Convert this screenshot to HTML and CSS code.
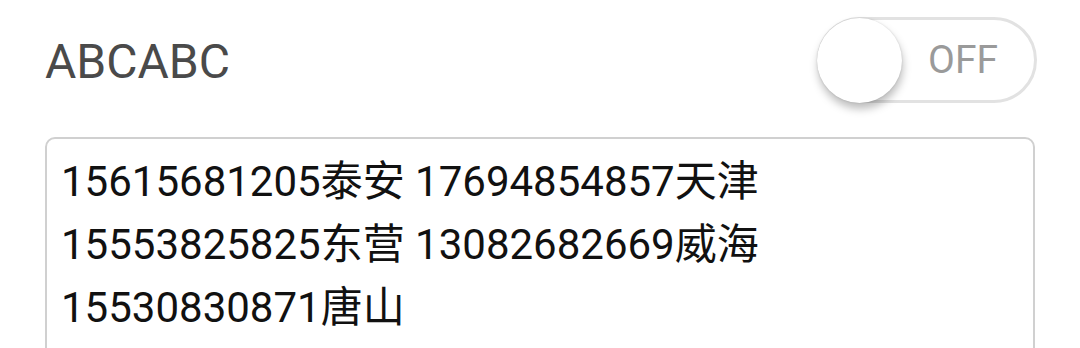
FILE: index.html
```html
<!DOCTYPE html>
<html>
<head>
<meta charset="utf-8"/>
    <title>ABCABC</title>
    <link rel="stylesheet" href="styles.css">
</head>
<body>
    <div class="Row">
        <div class="Label">ABCABC</div>
        <div class="Switch">
            <div class="Knob"></div>
            <span class="State">OFF</span>
        </div>
    </div>
    <div class="Box">
        15615681205泰安 17694854857天津<br>
        15553825825东营 13082682669威海<br>
        15530830871唐山
    </div>
</body>
</html>
```

FILE: styles.css
```css
body{margin:0;background:#fff;font-family:Roboto,"Noto Sans CJK SC",sans-serif;overflow:hidden;}
.Row{display:flex;align-items:center;justify-content:space-between;padding:17px 43px 0 45px;height:86px;}
.Label{padding-top:4px;font-size:48px;line-height:1;color:#4a4a4a;}
.Switch{position:relative;display:flex;align-items:center;justify-content:flex-end;box-sizing:border-box;width:220px;height:86px;padding-right:36px;border:3px solid #e2e2e2;border-radius:43px;}
.Knob{position:absolute;left:-3px;top:-2px;width:85px;height:85px;border-radius:50%;background:#fff;box-shadow:1px 6px 8px rgba(0,0,0,.26),0 0 2px rgba(0,0,0,.15);}
.State{font-size:39px;line-height:1;color:#9a9a9a;}
.Box{margin:34px 0 0 45px;box-sizing:border-box;width:990px;height:260px;padding:11px 14px;border:2px solid #d0d0d0;border-radius:10px;font-size:42px;line-height:63px;color:#111;}
```
